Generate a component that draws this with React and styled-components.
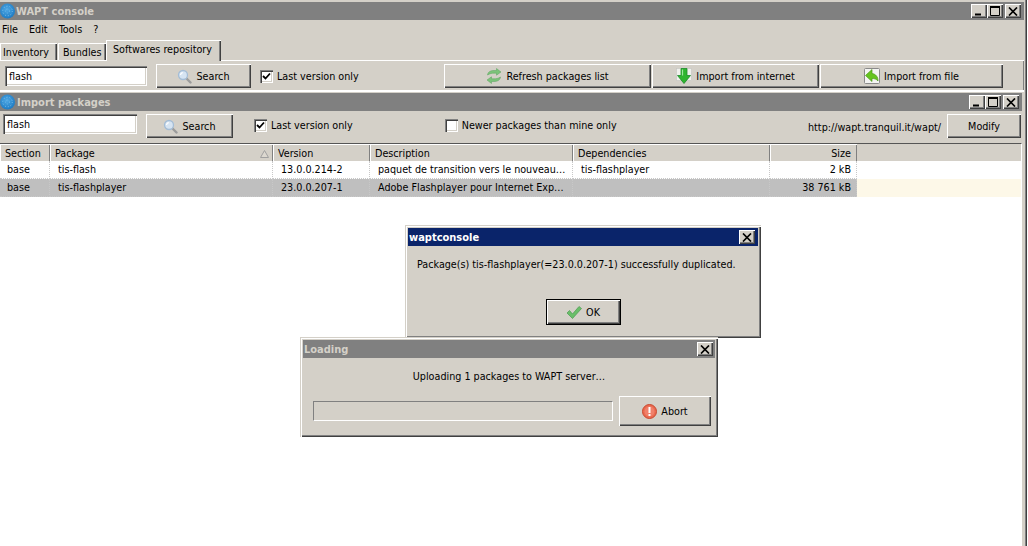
import React, { useId } from "react";
import styled, { createGlobalStyle, css } from "styled-components";

const GlobalStyle = createGlobalStyle`
  html, body {
    margin: 0;
    padding: 0;
    background: #fff;
  }
  body {
    font-family: "DejaVu Sans Condensed", "DejaVu Sans", sans-serif;
    font-stretch: condensed;
    font-size: 10.7px;
    color: #000;
    overflow: hidden;
  }
  * {
    box-sizing: border-box;
  }
`;

const raised = css`
  background: #d4d0c8;
  box-shadow: inset 1px 1px 0 #fff, inset -1px -1px 0 #404040, inset -2px -2px 0 #808080;
`;

const sunken = css`
  box-shadow: inset 1px 1px 0 #808080, inset 2px 2px 0 #404040, inset -1px -1px 0 #fff, inset -2px -2px 0 #d4d0c8;
`;

const Globe = () => {
  const id = useId();
  return (
    <svg width="16" height="18" viewBox="0 0 16 18">
      <defs>
        <radialGradient id={id} cx="45%" cy="40%" r="60%">
          <stop offset="0%" stopColor="#4fa8e4" />
          <stop offset="100%" stopColor="#1f7cc4" />
        </radialGradient>
      </defs>
      <circle cx="7.5" cy="9" r="7.5" fill={`url(#${id})`} />
      <circle cx="7.5" cy="9" r="4.8" fill="none" stroke="#8fcbf0" strokeWidth="0.8" strokeDasharray="1 2" />
      <circle cx="7.5" cy="9" r="2" fill="none" stroke="#7fc0ea" strokeWidth="0.7" strokeDasharray="1 1.5" />
    </svg>
  );
};

const Magnifier = () => (
  <svg width="15" height="15" viewBox="0 0 15 15">
    <path d="M9.5 9.5l4 4" stroke="#9c9c9c" strokeWidth="2.4" strokeLinecap="round" />
    <circle cx="6" cy="6" r="4.5" fill="#d6e4f2" stroke="#a4bdd6" strokeWidth="1.3" />
    <path d="M3.5 6a2.7 2.7 0 0 1 2.3-2.3" fill="none" stroke="#fff" strokeWidth="1.2" />
  </svg>
);

const RefreshIcon = () => (
  <svg width="16" height="16" viewBox="0 0 16 16">
    <path d="M1.5 7C2 3.5 5 2.5 8 2.5h2.5V0.5L15 4l-4.5 3.2V5.2H8C6 5.2 4 5.5 1.5 7z" fill="#7cc37a" stroke="#5ba25e" strokeWidth="0.5" />
    <path d="M14.5 9C14 12.5 11 13.5 8 13.5H5.5v2L1 12l4.5-3.2v2H8c2 0 4-.3 6.5-1.8z" fill="#7cc37a" stroke="#5ba25e" strokeWidth="0.5" />
  </svg>
);

const DownloadIcon = () => (
  <svg width="16" height="16" viewBox="0 0 16 16">
    <rect x="0.5" y="0.5" width="15" height="12" fill="#f0f0ec" stroke="#c4c4c0" strokeWidth="0.6" />
    <path d="M5 0.5h6v7h3.5L8 15.5 1.5 7.5H5z" fill="#2fb52f" stroke="#1c8a2a" strokeWidth="0.8" />
    <path d="M6.5 1.5v6" stroke="#9ce89c" strokeWidth="1.2" />
  </svg>
);

const ImportFileIcon = () => (
  <svg width="16" height="16" viewBox="0 0 16 16">
    <rect x="0.5" y="0.5" width="15" height="15" rx="1" fill="#f4f4f2" stroke="#8a8a8a" />
    <path d="M8 1.5L1.5 7.5 8 13.5v-3c2.5 0 4.5 .6 6 2.5 .2-4-2.2-7-6-7.5z" fill="#66c41f" stroke="#4a9a18" strokeWidth="0.7" />
  </svg>
);

const CheckIcon = () => (
  <svg width="16" height="16" viewBox="0 0 16 16">
    <path d="M1 9l2.5-2.5L6.5 10 13 2.5 15.5 4.5 6.5 14.5z" fill="#6abf69" stroke="#4c9a52" strokeWidth="0.7" />
  </svg>
);

const AbortIcon = () => (
  <svg width="15" height="15" viewBox="0 0 15 15">
    <circle cx="7.5" cy="7.5" r="7" fill="#ea6a50" stroke="#c9482f" />
    <circle cx="7.5" cy="7.5" r="5" fill="#f0806a" />
    <rect x="6.5" y="3" width="2" height="6" fill="#fff" />
    <rect x="6.5" y="10" width="2" height="2" fill="#fff" />
  </svg>
);

const SortArrow = () => (
  <svg width="9" height="8" viewBox="0 0 9 8">
    <path d="M4.5 0.5L8.5 7.5H0.5z" fill="#dcd8d0" stroke="#a0a0a0" strokeWidth="1" />
  </svg>
);

const Desktop = styled.div`
  position: relative;
  width: 1028px;
  height: 546px;
  background: #fff;
  overflow: hidden;
`;

const MainWindow = styled.div`
  display: flex;
  flex-direction: column;
  width: 1028px;
  height: 546px;
  padding: 2px 3px 0 0;
  background: #d4d0c8;
  border-right: 1px solid #fff;
  box-shadow: inset -1px 0 0 #404040, inset -2px 0 0 #808080;
`;

const TitleBar = styled.div`
  display: flex;
  align-items: center;
  flex: none;
  height: 18px;
  padding-right: ${(p) => p.$right || 2}px;
  background: ${(p) => (p.$active ? "#0a246a" : "#808080")};
  color: ${(p) => (p.$active ? "#fff" : "#d4d0c8")};
  font-family: "DejaVu Sans Condensed", "DejaVu Sans", sans-serif;
  font-stretch: condensed;
  font-weight: bold;
  font-size: 11px;
`;

const TitleIcon = styled.span`
  display: flex;
  margin-right: ${(p) => p.$gap || 0}px;
`;

const TitleText = styled.span`
  flex: 1;
  padding-left: ${(p) => p.$left || 0}px;
`;

const WindowButtons = styled.div`
  display: flex;
`;

const WindowButton = styled.span`
  ${raised}
  display: flex;
  align-items: center;
  justify-content: center;
  width: 16px;
  height: 14px;
  margin-left: ${(p) => (p.$gap ? 2 : 0)}px;
`;

const MenuBar = styled.div`
  display: flex;
  align-items: center;
  flex: none;
  gap: 11px;
  height: 20px;
  padding: 0 0 2px 2px;
`;

const TabStrip = styled.div`
  display: flex;
  align-items: flex-end;
  flex: none;
  height: 20px;
`;

const Tab = styled.div`
  display: flex;
  align-items: center;
  flex: none;
  height: ${(p) => (p.$active ? 21 : 17)}px;
  margin-bottom: ${(p) => (p.$active ? -1 : 0)}px;
  margin-right: ${(p) => p.$gap || 0}px;
  padding: ${(p) => p.$pad};
  width: ${(p) => p.$width}px;
  position: relative;
  z-index: ${(p) => (p.$active ? 1 : 0)};
  background: #d4d0c8;
  box-shadow: inset 1px 1px 0 #fff, inset -1px 0 0 #404040, inset -2px 0 0 #808080;
`;

const RepoPanel = styled.div`
  display: flex;
  align-items: flex-start;
  flex: none;
  height: 32px;
  padding: 3px 21px 0 5px;
  border-top: 1px solid #fff;
  border-bottom: 2px solid #fff;
  box-shadow: inset -1px 0 0 #808080;
`;

const ButtonGroup = styled.div`
  display: flex;
  gap: 1px;
  margin-left: auto;
`;

const TextField = styled.div`
  ${sunken}
  display: flex;
  align-items: center;
  flex: none;
  width: ${(p) => p.$width}px;
  height: 20px;
  margin-top: ${(p) => p.$top || 0}px;
  padding-left: 4px;
  background: #fff;
`;

const Button = styled.div`
  ${raised}
  display: flex;
  align-items: center;
  justify-content: center;
  flex: none;
  gap: 4px;
  width: ${(p) => p.$width}px;
  height: ${(p) => p.$height || 24}px;
  margin-left: ${(p) => p.$left || 0}px;
  margin-top: ${(p) => p.$top || 0}px;
  ${(p) =>
    p.$default &&
    css`
      border: 1px solid #000;
    `}
`;

const CheckLabel = styled.label`
  display: flex;
  align-items: center;
  flex: none;
  gap: 4px;
  height: 13px;
  margin-left: ${(p) => p.$left}px;
  margin-top: ${(p) => p.$top}px;
`;

const CheckBox = styled.span`
  ${sunken}
  display: flex;
  align-items: center;
  justify-content: center;
  flex: none;
  width: 13px;
  height: 13px;
  background: #fff;
`;

const ImportWindow = styled.div`
  display: flex;
  flex-direction: column;
  flex: 1;
  min-height: 0;
  margin-top: 1px;
  padding-right: 2px;
`;

const ImportToolbar = styled.div`
  display: flex;
  align-items: flex-start;
  flex: none;
  height: 32px;
  padding: 3px 1px 0 3px;
`;

const UrlText = styled.span`
  margin-left: auto;
  margin-top: 7px;
  margin-right: 6px;
`;

const Table = styled.div`
  flex: 1;
  min-height: 0;
  width: 1022px;
  background: #fff;
  border-top: 1px solid #555;
  border-right: 1px solid #fff;
`;

const columns = "50px 223px 97px 203px 197px 87px 1fr";

const HeaderRow = styled.div`
  display: grid;
  grid-template-columns: ${columns};
  height: 17px;
  background: #d4d0c8;
`;

const HeaderCell = styled.div`
  display: flex;
  align-items: center;
  justify-content: ${(p) => (p.$right ? "flex-end" : "space-between")};
  padding: 2px ${(p) => (p.$right ? 6 : 4)}px 0 5px;
  box-shadow: inset 1px 1px 0 #fff, inset -1px 0 0 #808080;
`;

const Row = styled.div`
  display: grid;
  grid-template-columns: ${columns};
  height: 18px;
`;

const Cell = styled.div`
  display: flex;
  align-items: center;
  justify-content: ${(p) => (p.$right ? "flex-end" : "flex-start")};
  padding: 0 ${(p) => (p.$right ? 5 : 2)}px 0 ${(p) => (p.$first ? 7 : 8)}px;
  white-space: nowrap;
  overflow: hidden;
  background: ${(p) => (p.$selected ? "#bfbfbf" : "#fff")};
  border-right: 1px dotted #c8c8c8;
  border-bottom: 1px dotted #c8c8c8;
`;

const Filler = styled.div`
  background: ${(p) => (p.$selected ? "#fdf8e8" : "#fff")};
`;

const Dialog = styled.div`
  position: absolute;
  left: ${(p) => p.$x}px;
  top: ${(p) => p.$y}px;
  z-index: ${(p) => p.$z || 1};
  width: ${(p) => p.$width}px;
  height: ${(p) => p.$height}px;
  padding: 3px;
  background: #d4d0c8;
  box-shadow: inset 1px 1px 0 #d4d0c8, inset 2px 2px 0 #fff, inset -1px -1px 0 #404040, inset -2px -2px 0 #808080;
`;

const Message = styled.div`
  margin: ${(p) => p.$margin};
  text-align: ${(p) => p.$align || "left"};
`;

const DialogActions = styled.div`
  display: flex;
  justify-content: center;
`;

const LoadingRow = styled.div`
  display: flex;
  align-items: center;
  padding-left: 10px;
  margin-top: 13px;
`;

const ProgressBar = styled.div`
  width: 300px;
  height: 20px;
  border-top: 1px solid #808080;
  border-left: 1px solid #808080;
  border-right: 1px solid #fff;
  border-bottom: 1px solid #fff;
`;

const CloseGlyph = () => (
  <svg width="10" height="9" viewBox="0 0 10 9">
    <path d="M1 0.5l8 8M9 0.5l-8 8" stroke="#000" strokeWidth="1.7" />
  </svg>
);

const MinGlyph = () => (
  <svg width="10" height="10" viewBox="0 0 10 10">
    <rect x="1" y="7.5" width="6" height="2" fill="#000" />
  </svg>
);

const MaxGlyph = () => (
  <svg width="10" height="10" viewBox="0 0 10 10">
    <path d="M0.5 1.5h9v8h-9z" fill="none" stroke="#000" />
    <rect x="0" y="0" width="10" height="2" fill="#000" />
  </svg>
);

const CheckMark = () => (
  <svg width="9" height="9" viewBox="0 0 9 9">
    <path d="M1 4l2.5 2.5L8 1.5" fill="none" stroke="#000" strokeWidth="1.8" />
  </svg>
);

const Controls = () => (
  <WindowButtons>
    <WindowButton>
      <MinGlyph />
    </WindowButton>
    <WindowButton>
      <MaxGlyph />
    </WindowButton>
    <WindowButton $gap>
      <CloseGlyph />
    </WindowButton>
  </WindowButtons>
);

const headers = ["Section", "Package", "Version", "Description", "Dependencies"];

const packages = [
  ["base", "tis-flash", "13.0.0.214-2", "paquet de transition vers le nouveau…", "tis-flashplayer", "2 kB"],
  ["base", "tis-flashplayer", "23.0.0.207-1", "Adobe Flashplayer pour Internet Exp…", "", "38 761 kB"],
];

export default function App() {
  return (
    <Desktop>
      <GlobalStyle />
      <MainWindow>
        <TitleBar $right={3}>
          <TitleIcon>
            <Globe />
          </TitleIcon>
          <TitleText>WAPT console</TitleText>
          <Controls />
        </TitleBar>
        <MenuBar>
          <span>File</span>
          <span>Edit</span>
          <span>Tools</span>
          <span>?</span>
        </MenuBar>
        <TabStrip>
          <Tab $width={57} $gap={1} $pad="1px 0 0 3px">
            Inventory
          </Tab>
          <Tab $width={48} $pad="1px 0 0 5px">
            Bundles
          </Tab>
          <Tab $active $width={115} $pad="0 0 2px 7px">
            Softwares repository
          </Tab>
        </TabStrip>
        <RepoPanel>
          <TextField $width={142} $top={2}>
            flash
          </TextField>
          <Button $width={95} $left={9}>
            <Magnifier />
            Search
          </Button>
          <CheckLabel $left={9} $top={6}>
            <CheckBox>
              <CheckMark />
            </CheckBox>
            Last version only
          </CheckLabel>
          <ButtonGroup>
            <Button $width={207}>
              <RefreshIcon />
              Refresh packages list
            </Button>
            <Button $width={167}>
              <DownloadIcon />
              Import from internet
            </Button>
            <Button $width={183}>
              <ImportFileIcon />
              Import from file
            </Button>
          </ButtonGroup>
        </RepoPanel>
        <ImportWindow>
          <TitleBar $right={3}>
            <TitleIcon $gap={1}>
              <Globe />
            </TitleIcon>
            <TitleText>Import packages</TitleText>
            <Controls />
          </TitleBar>
          <ImportToolbar>
            <TextField $width={134}>flash</TextField>
            <Button $width={87} $left={9}>
              <Magnifier />
              Search
            </Button>
            <CheckLabel $left={21} $top={5}>
              <CheckBox>
                <CheckMark />
              </CheckBox>
              Last version only
            </CheckLabel>
            <CheckLabel $left={92} $top={5}>
              <CheckBox />
              Newer packages than mine only
            </CheckLabel>
            <UrlText>http://wapt.tranquil.it/wapt/</UrlText>
            <Button $width={74}>Modify</Button>
          </ImportToolbar>
          <Table>
            <HeaderRow>
              {headers.map((label) => (
                <HeaderCell key={label}>
                  {label}
                  {label === "Package" && <SortArrow />}
                </HeaderCell>
              ))}
              <HeaderCell $right>Size</HeaderCell>
              <div />
            </HeaderRow>
            {packages.map((row, index) => (
              <Row key={row[1]}>
                {row.map((value, col) => (
                  <Cell key={col} $selected={index === 1} $right={col === 5} $first={col === 0}>
                    {value}
                  </Cell>
                ))}
                <Filler $selected={index === 1} />
              </Row>
            ))}
          </Table>
        </ImportWindow>
      </MainWindow>

      <Dialog $x={405} $y={225} $width={356} $height={113}>
        <TitleBar $active $right={3}>
          <TitleText $left={1}>waptconsole</TitleText>
          <WindowButton>
            <CloseGlyph />
          </WindowButton>
        </TitleBar>
        <Message $margin="12px 0 0 9px">Package(s) tis-flashplayer(=23.0.0.207-1) successfully duplicated.</Message>
        <DialogActions>
          <Button $default $width={75} $height={26} $top={28}>
            <CheckIcon />
            OK
          </Button>
        </DialogActions>
      </Dialog>

      <Dialog $x={300} $y={337} $z={2} $width={418} $height={100}>
        <TitleBar $right={2}>
          <TitleText $left={1}>Loading</TitleText>
          <WindowButton>
            <CloseGlyph />
          </WindowButton>
        </TitleBar>
        <Message $margin="12px 0 0 0" $align="center">
          Uploading 1 packages to WAPT server…
        </Message>
        <LoadingRow>
          <ProgressBar />
          <Button $width={92} $height={30} $left={6}>
            <AbortIcon />
            Abort
          </Button>
        </LoadingRow>
      </Dialog>
    </Desktop>
  );
}
